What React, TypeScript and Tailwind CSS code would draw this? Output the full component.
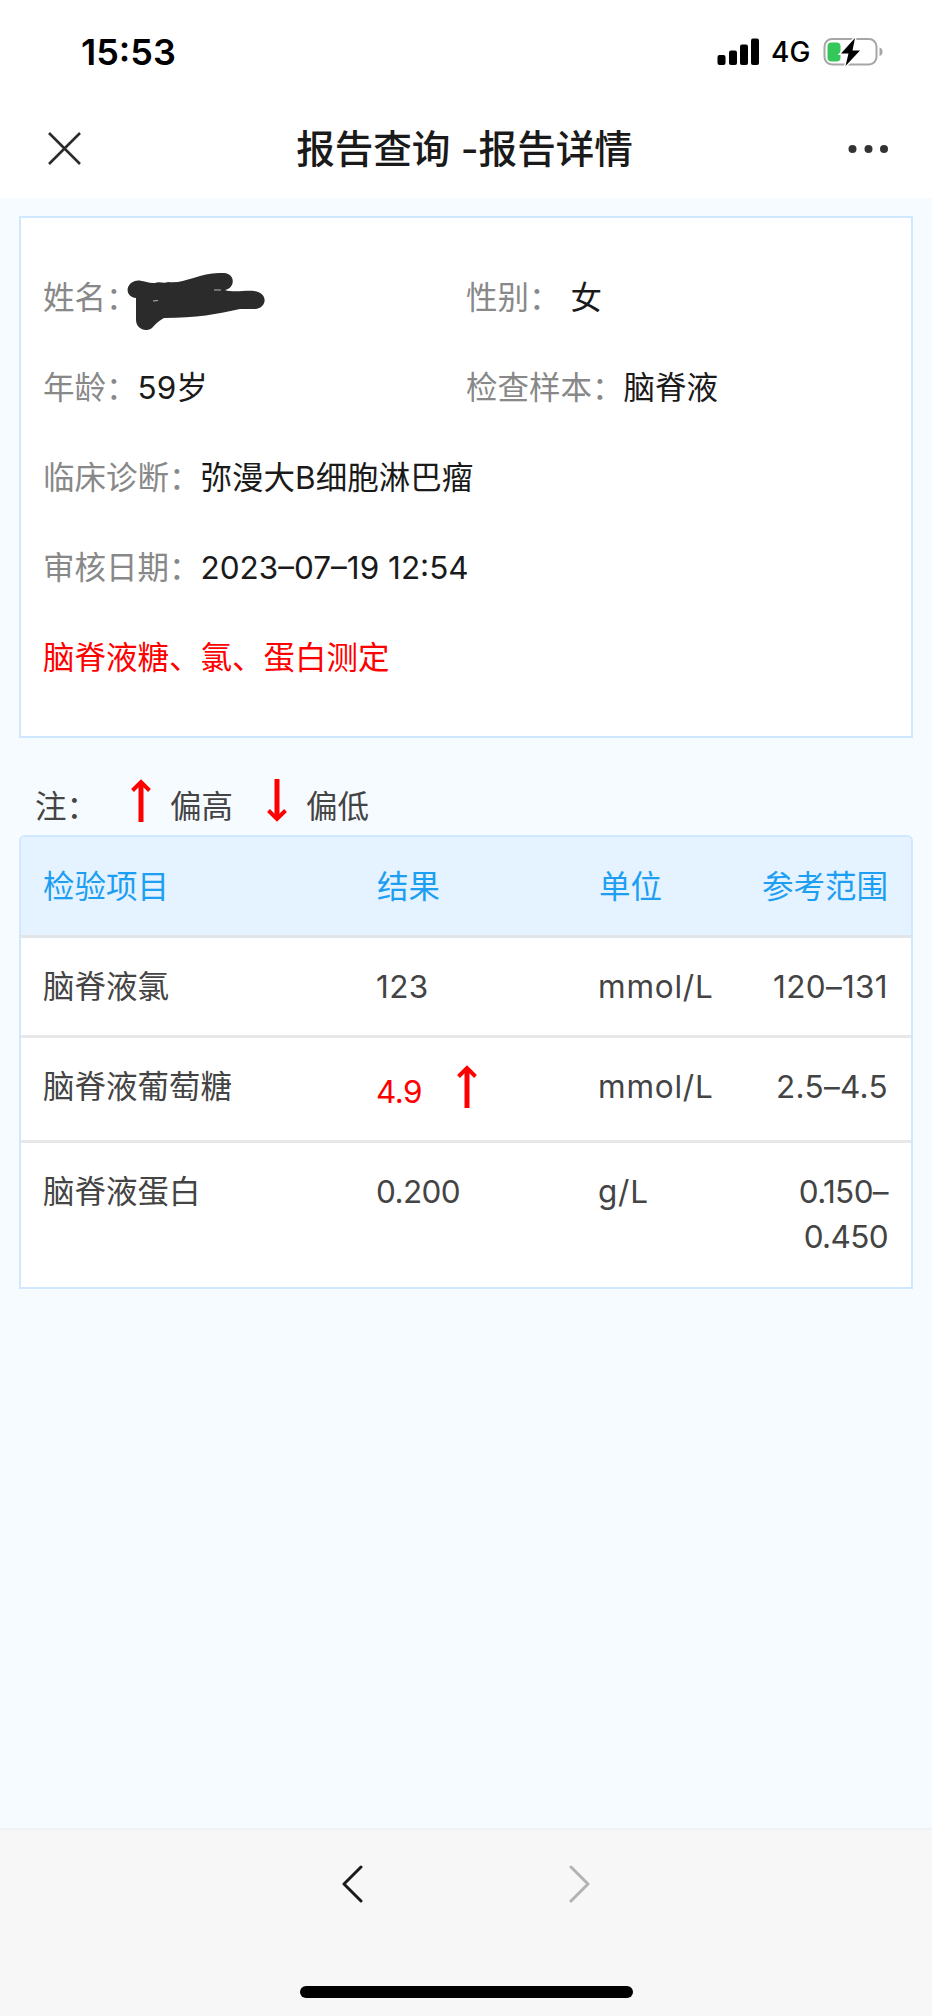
const rows = [
    { name: '脑脊液氯', result: '123', unit: 'mmol/L', range: ['120–131'], high: false, spacing: 'tracking-[0.01em]' },
    { name: '脑脊液葡萄糖', result: '4.9', unit: 'mmol/L', range: ['2.5–4.5'], high: true, spacing: 'tracking-[0.01em]' },
    { name: '脑脊液蛋白', result: '0.200', unit: 'g/L', range: ['0.150–', '0.450'], high: false, spacing: 'tracking-[-0.02em]' },
];

const Arrow = ({ className = '' }) => (
    <svg className={className} width="20" height="43" viewBox="0 0 20 43" fill="none" stroke="#ff0000">
        <path d="M10 43V3" strokeWidth="5" />
        <path d="M1.5 11.5L10 3L18.5 11.5" strokeWidth="4" />
    </svg>
);

const Field = ({ label, value }: { label: string; value: string }) => (
    <div className="flex">
        <span className="text-[#888888]">{label}：</span>
        <span className="text-[#1a1a1a]">{value}</span>
    </div>
);

const StatusBar = () => (
    <div className="flex h-[104px] items-center justify-between pl-[81px] pr-[49px]">
        <div className="text-[36px] font-semibold text-black">15:53</div>
        <div className="flex items-center">
            <svg width="43" height="28" viewBox="0 0 43 28" fill="#000">
                <rect x="0.5" y="17" width="8" height="10" rx="2" />
                <rect x="12" y="12.5" width="8" height="14.5" rx="2" />
                <rect x="23" y="6.5" width="8" height="20.5" rx="2" />
                <rect x="34" y="0.5" width="8" height="26.5" rx="2" />
            </svg>
            <span className="ml-[11px] w-[51px] text-[28px] font-medium text-black">4G</span>
            <svg width="61" height="30" viewBox="0 0 61 30">
                <rect x="2.5" y="2" width="52" height="25.5" rx="7.5" fill="none" stroke="#a6a6a6" strokeWidth="2" />
                <path d="M57.5 10.5C61.5 11.5 61.5 18 57.5 19Z" fill="#a6a6a6" />
                <rect x="5.5" y="5.5" width="13" height="19" rx="4" fill="#34c759" />
                <path d="M33 1L19 16.5H26.5L23.5 29L38 13.5H30.5Z" fill="#000" stroke="#fff" strokeWidth="3" paintOrder="stroke" />
            </svg>
        </div>
    </div>
);

const App = () => {
    return (
        <div
            lang="zh-CN"
            className="flex h-[2016px] w-[932px] flex-col bg-[#f6fbff] font-['Inter','Noto_Sans_CJK_SC',sans-serif] text-[31.5px] leading-[45px] text-[#444444]"
        >
            {/* Header */}
            <header className="h-[198px] bg-white">
                <StatusBar />
                <div className="flex h-[89px] items-center justify-between pl-[48px] pr-[43px]">
                    <svg width="33" height="33" viewBox="0 0 33 33" fill="none" stroke="#2b2b2b" strokeWidth="2.6">
                        <path d="M1 1L32 32M32 1L1 32" />
                    </svg>
                    <h1 className="pt-px text-[38.6px] font-medium text-[#1a1a1a]">报告查询 -报告详情</h1>
                    <svg width="41" height="10" viewBox="0 0 41 10" fill="#333">
                        <circle cx="4.5" cy="5" r="4" />
                        <circle cx="20.5" cy="5" r="4" />
                        <circle cx="36" cy="5" r="4" />
                    </svg>
                </div>
            </header>

            <main className="flex-1 px-[19px] pt-[18px]">
                {/* Patient info */}
                <section className="h-[522px] border-[2px] border-[#cfe8ff] bg-white px-[22px] pt-[57px]">
                    <div className="flex flex-col gap-[45px]">
                        <div className="grid grid-cols-[423px_1fr]">
                            <div className="relative">
                                <Field label="姓名" value="" />
                                <svg className="absolute left-[83px] top-[-3px]" width="141" height="60" viewBox="0 0 141 60" fill="#2b2b2b">
                                    <path d="M9 9C14 7 20 11 29 11C33 9 38 12 42 10C61 12 73 0 96 1H98C110 2 109 16 99 18C107 21 120 18 128 19C143 21 141 36 129 37H114C92 42 70 46 38 46C32 49 29 53 26 56C19 61 10 56 10 48V26C-1 25 -1 12 9 9Z" />
                                    <path d="M27 29L32 28.5M88 18H95" stroke="#ddd" strokeWidth="0.8" />
                                </svg>
                            </div>
                            <div className="flex">
                                <span className="text-[#888888]">性别：</span>
                                <span className="ml-[10px] text-[#1a1a1a]">女</span>
                            </div>
                        </div>
                        <div className="grid grid-cols-[423px_1fr]">
                            <Field label="年龄" value="59岁" />
                            <Field label="检查样本" value="脑脊液" />
                        </div>
                        <Field label="临床诊断" value="弥漫大B细胞淋巴瘤" />
                        <Field label="审核日期" value="2023–07–19 12:54" />
                        <div className="text-[#ff0000]">脑脊液糖、氯、蛋白测定</div>
                    </div>
                </section>

                {/* Legend */}
                <div className="flex h-[97px] pl-[16px] pt-[41px]">
                    <span className="mt-[5px]">注：</span>
                    <Arrow className="ml-[33px]" />
                    <span className="ml-[19px] mt-[5px]">偏高</span>
                    <Arrow className="ml-[34px] rotate-180" />
                    <span className="ml-[19px] mt-[5px]">偏低</span>
                </div>

                {/* Results */}
                <section className="overflow-hidden rounded-t-[6px] border-[2px] border-[#cfe8ff] bg-white">
                    <div className="grid h-[101px] grid-cols-[334px_222px_1fr_auto] border-b-[3px] border-[#e2e5e8] bg-[#e5f2ff] pl-[22px] pr-[23px] pt-[27px] text-[#1c9ff2]">
                        <span>检验项目</span>
                        <span>结果</span>
                        <span>单位</span>
                        <span>参考范围</span>
                    </div>
                    {rows.map((row) => (
                        <div
                            key={row.name}
                            className="grid min-h-[100px] grid-cols-[334px_222px_1fr_auto] border-b-[3px] border-[#e8e8e8] pb-[26px] pl-[22px] pr-[23px] pt-[26px] last:min-h-[144px] last:border-b-0 last:pb-[22px]"
                        >
                            <span>{row.name}</span>
                            {row.high ? (
                                <span className="-ml-px flex h-[50px] text-[#ff0000]">
                                    <span className="w-[81px] pt-[5px] tracking-[-0.02em]">{row.result}</span>
                                    <Arrow className="mt-px" />
                                </span>
                            ) : (
                                <span className={`-ml-px ${row.spacing}`}>{row.result}</span>
                            )}
                            <span className="-ml-px tracking-[0.025em]">{row.unit}</span>
                            <span className={`text-right ${row.spacing}`}>
                                {row.range.map((line) => (
                                    <span key={line} className="block">{line}</span>
                                ))}
                            </span>
                        </div>
                    ))}
                </section>
            </main>

            {/* Browser bar */}
            <footer className="flex h-[188px] flex-col items-center border-t-2 border-[#f0f2f4] bg-[#f7f7f7] pt-[34px]">
                <div className="flex w-[250px] justify-between">
                    <svg width="22" height="40" viewBox="0 0 22 40" fill="none" stroke="#1a1a1a" strokeWidth="3" strokeLinecap="round" strokeLinejoin="round">
                        <path d="M20 3L3 20L20 37" />
                    </svg>
                    <svg width="22" height="40" viewBox="0 0 22 40" fill="none" stroke="#b2b2b2" strokeWidth="3" strokeLinecap="round" strokeLinejoin="round">
                        <path d="M2 3L19 20L2 37" />
                    </svg>
                </div>
                <div className="mt-[82px] h-[12px] w-[333px] rounded-full bg-black" />
            </footer>
        </div>
    );
};

export default App;
